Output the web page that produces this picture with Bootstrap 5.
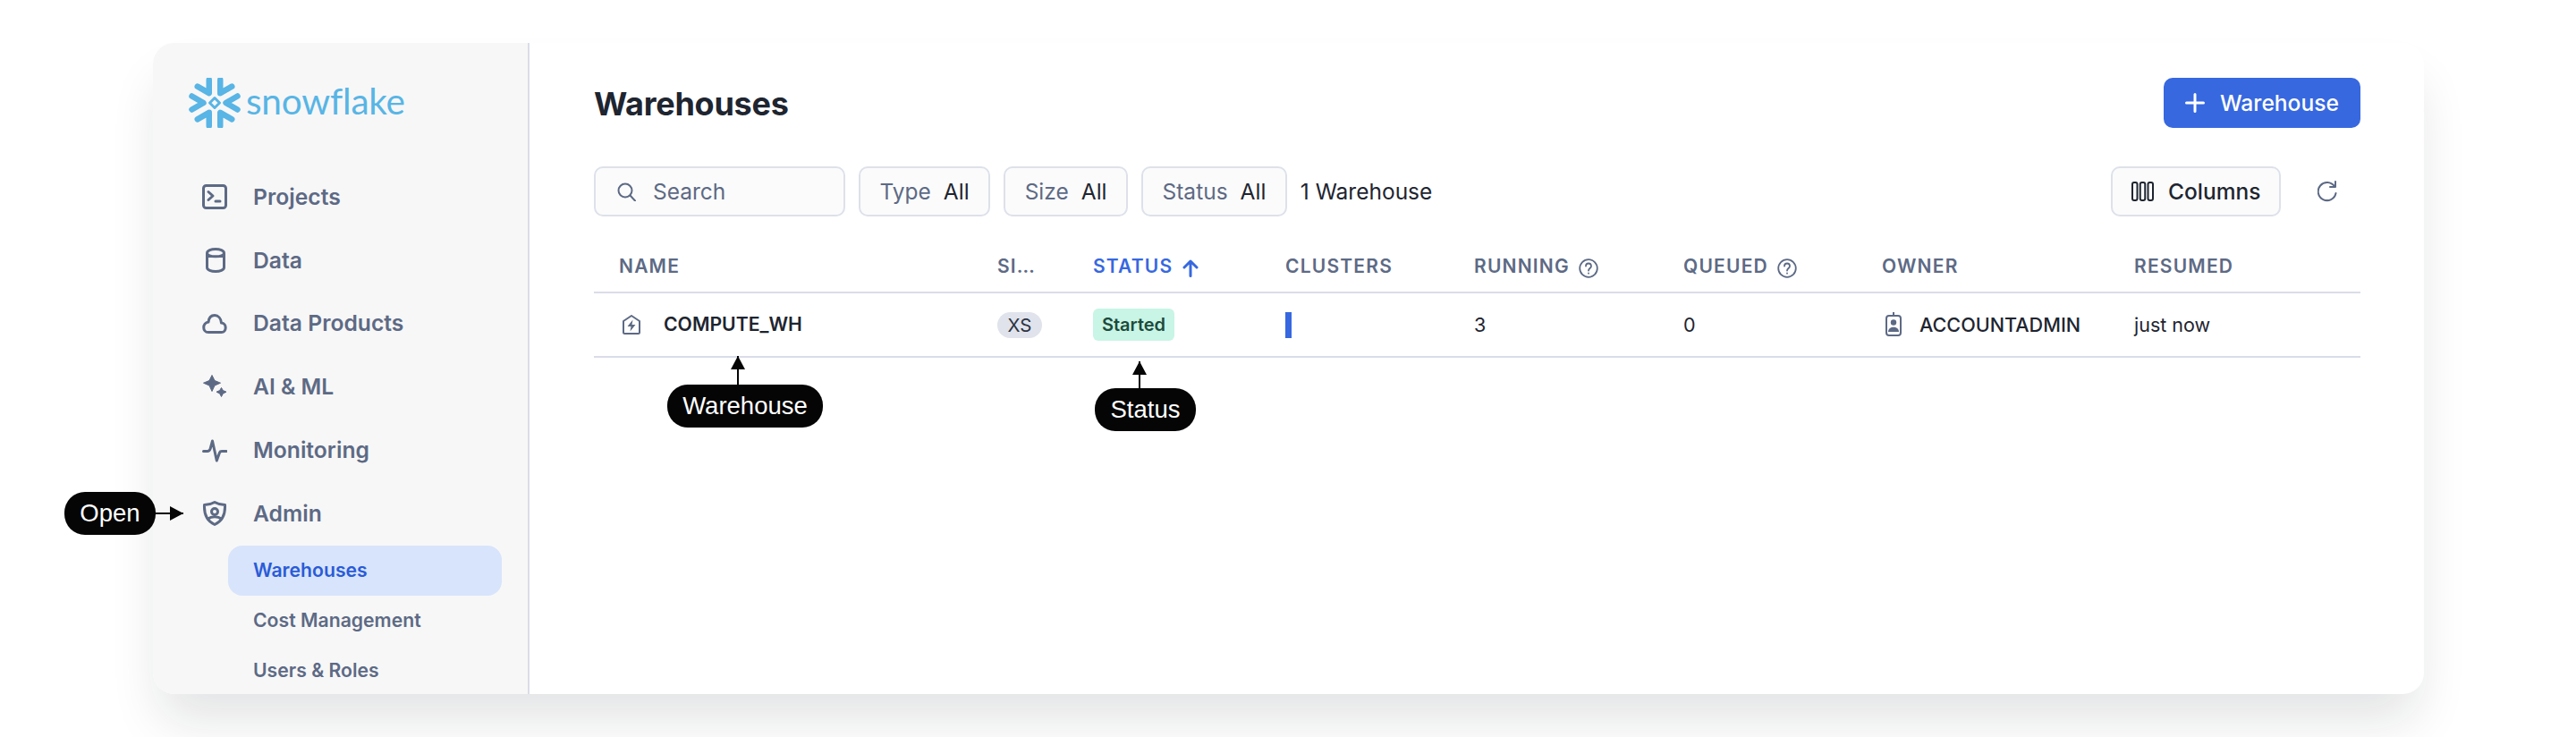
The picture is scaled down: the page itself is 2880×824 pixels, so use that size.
<!DOCTYPE html>
<html lang="en">
<head>
  <meta charset="UTF-8">
  <title>Warehouses</title>
  <link href="https://cdn.jsdelivr.net/npm/bootstrap@5.3.0/dist/css/bootstrap.min.css" rel="stylesheet">
  <style>
    body { background: #fff; font-family: Inter, "Liberation Sans", sans-serif; color: #1e2530; height: 824px; overflow: hidden; }
    .stage { position: relative; height: 824px; padding: 48px 170px 48px 171px; }
    .app-window { height: 728px; border-radius: 24px; background: #fff; box-shadow: 0 36px 56px -8px rgba(20, 25, 35, .12); overflow: hidden; }

    .side { width: 421px; flex: none; background: #f7f7f7; border-right: 2px solid #d9dde8; padding: 39px 29px 0 40px; }
    .brand { height: 56px; gap: 6px; color: #58b5e5; }
    .brand-name { font-family: Lato, sans-serif; font-weight: 400; font-size: 40.6px; line-height: 56px; letter-spacing: -.2px; position: relative; top: -2px; }
    .side-nav { margin-top: 42px; }
    .nav-entry { height: 70.8px; gap: 29px; padding-left: 15px; font-size: 24.7px; font-weight: 600; color: #5d6a85; }
    .nav-entry svg { width: 28px; height: 28px; flex: none; }
    .sub-entry { height: 56px; margin-left: 44px; padding-left: 28px; border-radius: 16px; font-size: 21.2px; font-weight: 600; color: #5d6a85; }
    .sub-entry.on { background: #d8e4fb; color: #2a5bd7; }

    .content { padding: 39px 71px 0 72px; min-width: 0; }
    .page-title { font-size: 36px; font-weight: 700; margin: 3px 0 0; letter-spacing: -.25px; }
    .btn-add { height: 56px; width: 220px; border-radius: 10px; background: #3768df; border: 0; color: #fff; font-size: 24.6px; font-weight: 500; gap: 17px; padding: 0; }
    .toolbar { margin-top: 43px; gap: 15px; font-size: 24.5px; }
    .field-box { height: 56px; border: 2px solid #dde1ea; border-radius: 10px; background: #fbfbfb; color: #5d6a85; font-weight: 400; }
    .search-box { width: 281px; padding-left: 24px; gap: 19px; }
    .pick-box { padding: 0 21.5px; gap: 14px; }
    .pick-box b { font-weight: 400; color: #1e2530; }
    .count-text { color: #1e2530; font-weight: 400; }
    .col-box { width: 190px; gap: 16px; padding-left: 21px; color: #1e2530; font-weight: 500; }
    .refresh-ico { width: 22px; height: 24px; margin: 0 26px; }

    .wh-table { table-layout: fixed; width: 100%; margin: 28px 0 0; border-collapse: collapse; }
    .wh-table th { height: 57px; padding: 0 0 0 28px; font-size: 21px; font-weight: 600; letter-spacing: 1.2px; color: #5d6a85; border-bottom: 2px solid #d9dde8; vertical-align: middle; white-space: nowrap; background: transparent; }
    .wh-table td { height: 72px; padding: 0 0 0 28px; font-size: 21.5px; font-weight: 400; color: #1e2530; border-bottom: 2px solid #d9dde8; vertical-align: middle; background: transparent; }
    .wh-table th.sorted { color: #3768df; }
    .c-name { width: 423px; } .c-size { width: 107px; } .c-status { width: 215px; } .c-clusters { width: 211px; }
    .c-running { width: 234px; } .c-queued { width: 222px; } .c-owner { width: 282px; }
    .head-ico { margin-left: 4px; }
    .wh-name { gap: 26px; padding-left: 4px; font-size: 21.2px; font-weight: 600; color: #1e2530; }
    .size-pill { display: inline-block; width: 50px; line-height: 29px; border-radius: 15px; background: #e0e3eb; text-align: center; font-size: 20.5px; color: #2c3442; }
    .state-pill { display: inline-block; width: 91px; line-height: 36px; border-radius: 6px; background: #c8f5e6; text-align: center; font-size: 20px; font-weight: 600; color: #1d4a3c; }
    .cluster-bar { display: block; width: 7px; height: 29px; background: #3768df; }
    .owner-cell { gap: 20px; padding-left: 4px; font-size: 21.6px; font-weight: 500; }

    .note { position: absolute; height: 48px; border-radius: 23px; background: #050505; color: #fff; font-family: "Liberation Sans", Arial, sans-serif; font-size: 27.5px; line-height: 48px; text-align: center; }
    .arrow-up { position: absolute; width: 2px; background: #050505; }
    .arrow-up::before { content: ""; position: absolute; top: 0; left: -7px; border: 8px solid transparent; border-top: 0; border-bottom: 15px solid #050505; }
    .arrow-right { position: absolute; height: 2px; background: #050505; }
    .arrow-right::after { content: ""; position: absolute; right: 0; top: -7px; border: 8px solid transparent; border-right: 0; border-left: 15px solid #050505; }
    .note-open { left: 72px; top: 550px; width: 102px; }
    .note-wh { left: 746px; top: 430px; width: 174px; }
    .note-status { left: 1224px; top: 434px; width: 113px; }
    .arrow-open { left: 174px; top: 573px; width: 31px; }
    .arrow-wh { left: 824px; top: 398px; height: 32px; }
    .arrow-status { left: 1273px; top: 404px; height: 30px; }
  </style>
</head>
<body>
  <div class="stage">
    <div class="app-window d-flex">

      <!-- Sidebar -->
      <aside class="side">
        <div class="brand d-flex align-items-center">
          <svg width="58" height="56" viewBox="-29 -28 58 56" fill="none" stroke="#58b5e5" stroke-width="6.5" stroke-linecap="round" stroke-linejoin="round">
            <g transform="rotate(30)"><path d="M-7.500-25.500 0-12.500 7.500-25.500"/></g>
            <g transform="rotate(90)"><path d="M-7.500-25.500 0-12.500 7.500-25.500"/></g>
            <g transform="rotate(150)"><path d="M-7.500-25.500 0-12.500 7.500-25.500"/></g>
            <g transform="rotate(210)"><path d="M-7.500-25.500 0-12.500 7.500-25.500"/></g>
            <g transform="rotate(270)"><path d="M-7.500-25.500 0-12.500 7.500-25.500"/></g>
            <g transform="rotate(330)"><path d="M-7.500-25.500 0-12.500 7.500-25.500"/></g>
            <path d="M0-5.500 5.500 0 0 5.500-5.500 0Z" stroke-width="3"/>
          </svg>
          <span class="brand-name">snowflake</span>
        </div>

        <nav class="side-nav">
          <div class="nav-entry d-flex align-items-center">
            <svg viewBox="0 0 28 28" fill="none" stroke="#5d6a85" stroke-width="3" stroke-linecap="round" stroke-linejoin="round"><rect x="1.500" y="1.500" width="25" height="25" rx="3"/><path d="M7 8.500l5 4.500-5 4.500M15 19h5"/></svg>
            Projects
          </div>
          <div class="nav-entry d-flex align-items-center">
            <svg viewBox="0 0 28 28" fill="none" stroke="#5d6a85" stroke-width="3" stroke-linecap="round" stroke-linejoin="round"><path d="M5.500 6c0-6 19-6 19 0v16c0 6-19 6-19 0ZM5.500 6c0 5 19 5 19 0"/></svg>
            Data
          </div>
          <div class="nav-entry d-flex align-items-center">
            <svg viewBox="0 0 28 28" fill="none" stroke="#5d6a85" stroke-width="3" stroke-linecap="round" stroke-linejoin="round"><path d="M7 23.500h14.500c6 0 6.500-10 0-10.500C21 8 18 4.500 14 4.500c-4 0-6.500 3-7 7.500-7 1-7 11.500 0 11.500Z"/></svg>
            Data Products
          </div>
          <div class="nav-entry d-flex align-items-center">
            <svg viewBox="0 0 28 28" fill="#5d6a85" stroke="#5d6a85" stroke-width="1" stroke-linejoin="round"><path d="M11 .5 14 6.500l6.500 2.700L14 12l-3 6.500L8 12 1.500 9.200 8 6.500Z"/><path d="M21.500 14.500 23.300 17.500 27 19.200 23.300 21 21.500 24.500 19.700 21 16 19.200 19.700 17.500Z"/></svg>
            AI &amp; ML
          </div>
          <div class="nav-entry d-flex align-items-center">
            <svg viewBox="0 0 28 28" fill="none" stroke="#5d6a85" stroke-width="3" stroke-linecap="round" stroke-linejoin="round"><path d="M1.500 14.500h4.500c2 0 2.500-1 3.200-3L11.500 3l4.800 22 3.200-9c.5-1.300 1-1.500 2.500-1.500h5"/></svg>
            Monitoring
          </div>
          <div class="nav-entry d-flex align-items-center">
            <svg viewBox="0 0 28 28" fill="none" stroke="#5d6a85" stroke-width="3" stroke-linecap="round" stroke-linejoin="round"><path d="M14 1.500c3.500 2 7 3 11.500 3 .5 10-2.500 18-11.500 22-9-4-12-12-11.500-22C7 4.500 10.500 3.500 14 1.500Z"/><circle cx="14" cy="12" r="3.500"/><path d="M6.500 20c4-3 11-3 15 0"/></svg>
            Admin
          </div>
          <div class="sub-entry on d-flex align-items-center">Warehouses</div>
          <div class="sub-entry d-flex align-items-center">Cost Management</div>
          <div class="sub-entry d-flex align-items-center">Users &amp; Roles</div>
        </nav>
      </aside>

      <!-- Main -->
      <main class="content flex-fill">
        <div class="d-flex justify-content-between align-items-center">
          <h1 class="page-title">Warehouses</h1>
          <button class="btn btn-add d-flex align-items-center justify-content-center">
            <svg width="22" height="22" viewBox="0 0 22 22" fill="none" stroke="#fff" stroke-width="3" stroke-linecap="round"><path d="M11 1.500v19M1.500 11h19"/></svg>
            Warehouse
          </button>
        </div>

        <div class="toolbar d-flex align-items-center">
          <div class="field-box search-box d-flex align-items-center">
            <svg width="21" height="21" viewBox="0 0 21 21" fill="none" stroke="#5d6a85" stroke-width="2" stroke-linecap="round"><circle cx="9" cy="9" r="7.500"/><path d="M14.500 14.500l5.500 6"/></svg>
            Search
          </div>
          <div class="field-box pick-box d-flex align-items-center">Type <b>All</b></div>
          <div class="field-box pick-box d-flex align-items-center">Size <b>All</b></div>
          <div class="field-box pick-box d-flex align-items-center">Status <b>All</b></div>
          <span class="count-text">1 Warehouse</span>
          <div class="ms-auto field-box col-box d-flex align-items-center">
            <svg width="25" height="22" viewBox="0 0 25 22" fill="none" stroke="#1e2530" stroke-width="2"><rect x="1" y="1" width="5.500" height="20" rx="2"/><rect x="9.750" y="1" width="5.500" height="20" rx="2"/><rect x="18.500" y="1" width="5.500" height="20" rx="2"/></svg>
            Columns
          </div>
          <svg class="refresh-ico" viewBox="0 0 22 24" fill="none" stroke="#5d6a85" stroke-width="2" stroke-linecap="round" stroke-linejoin="round"><path d="M19 6.500A10 10 0 1 0 20.500 14"/><path d="M20 1v6h-6"/></svg>
        </div>

        <table class="table wh-table">
          <thead>
            <tr>
              <th class="c-name">NAME</th>
              <th class="c-size">SI…</th>
              <th class="c-status sorted">STATUS
                <svg class="head-ico" width="18" height="20" viewBox="0 0 18 20" fill="none" stroke="#3768df" stroke-width="3" stroke-linecap="round" stroke-linejoin="round"><path d="M9 18.500V2M2 9l7-7 7 7"/></svg>
              </th>
              <th class="c-clusters">CLUSTERS</th>
              <th class="c-running">RUNNING
                <svg class="head-ico" width="22" height="22" viewBox="0 0 22 22" fill="none" stroke="#5d6a85" stroke-width="1.800" stroke-linecap="round"><circle cx="11" cy="11" r="9.800"/><path d="M8 8.500c0-4 6-4 6 0 0 2.500-3 2.500-3 5"/><path d="M11 16.500v.2"/></svg>
              </th>
              <th class="c-queued">QUEUED
                <svg class="head-ico" width="22" height="22" viewBox="0 0 22 22" fill="none" stroke="#5d6a85" stroke-width="1.800" stroke-linecap="round"><circle cx="11" cy="11" r="9.800"/><path d="M8 8.500c0-4 6-4 6 0 0 2.500-3 2.500-3 5"/><path d="M11 16.500v.2"/></svg>
              </th>
              <th class="c-owner">OWNER</th>
              <th>RESUMED</th>
            </tr>
          </thead>
          <tbody>
            <tr>
              <td>
                <div class="wh-name d-flex align-items-center">
                  <svg width="20" height="22" viewBox="0 0 20 22" fill="none" stroke="#5d6a85" stroke-width="2" stroke-linejoin="round"><path d="M1 7 10 1l9 6v12.500a1.500 1.500 0 0 1-1.500 1.500h-15A1.500 1.500 0 0 1 1 19.500Z"/><path d="M11.500 5.500 5.500 13h4l-1 5.500 6-7.500h-4Z" fill="#5d6a85" stroke="none"/></svg>
                  COMPUTE_WH
                </div>
              </td>
              <td><span class="size-pill">XS</span></td>
              <td><span class="state-pill">Started</span></td>
              <td><span class="cluster-bar"></span></td>
              <td>3</td>
              <td>0</td>
              <td>
                <div class="owner-cell d-flex align-items-center">
                  <svg width="18" height="27" viewBox="0 0 18 27" fill="none" stroke="#5d6a85" stroke-width="2"><path d="M9 0v4"/><rect x="1" y="4" width="16" height="22" rx="3"/><circle cx="9" cy="11.500" r="3.200" fill="#5d6a85" stroke="none"/><path d="M3 22c0-7 12-7 12 0Z" fill="#5d6a85" stroke="none"/></svg>
                  ACCOUNTADMIN
                </div>
              </td>
              <td>just now</td>
            </tr>
          </tbody>
        </table>
      </main>
    </div>

    <!-- Callouts over the screenshot -->
    <div class="note note-open">Open</div>
    <div class="arrow-right arrow-open"></div>
    <div class="note note-wh">Warehouse</div>
    <div class="arrow-up arrow-wh"></div>
    <div class="note note-status">Status</div>
    <div class="arrow-up arrow-status"></div>
  </div>
  <script src="https://cdn.jsdelivr.net/npm/bootstrap@5.3.0/dist/js/bootstrap.bundle.min.js"></script>
</body>
</html>
